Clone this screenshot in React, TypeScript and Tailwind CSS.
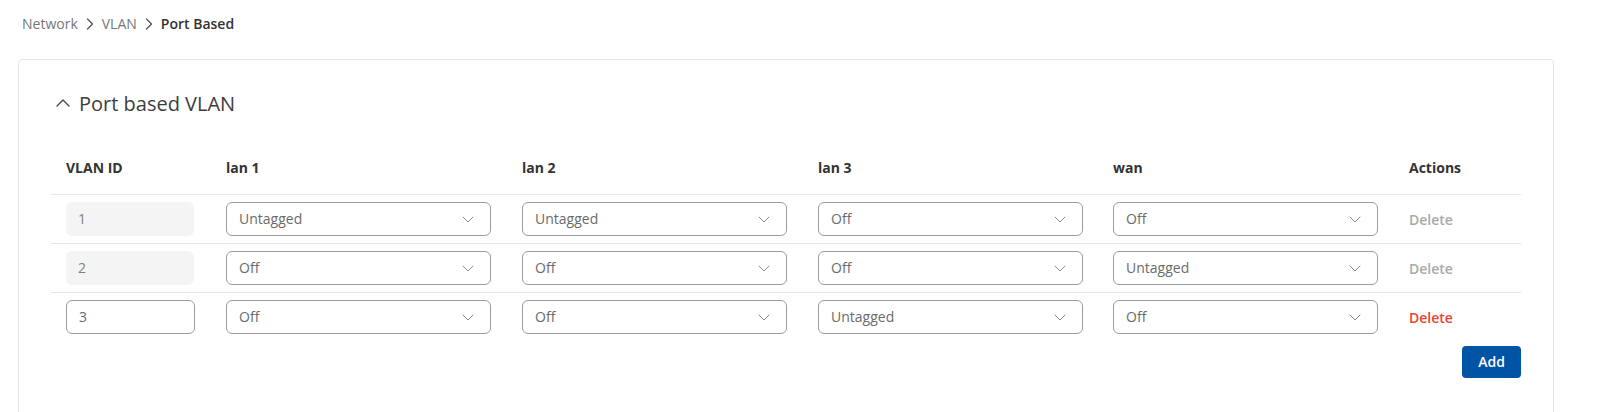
import { ChevronUp } from 'lucide-react';

type Port = 'Untagged' | 'Off' | 'Tagged';

interface VlanRow {
  id: string;
  editable: boolean;
  ports: Port[];
}

const columns = ['lan 1', 'lan 2', 'lan 3', 'wan'];

const rows: VlanRow[] = [
  { id: '1', editable: false, ports: ['Untagged', 'Untagged', 'Off', 'Off'] },
  { id: '2', editable: false, ports: ['Off', 'Off', 'Off', 'Untagged'] },
  { id: '3', editable: true, ports: ['Off', 'Off', 'Untagged', 'Off'] },
];

const Crumb = () => (
  <svg width="8" height="12" viewBox="0 0 8 12" fill="none" className="mx-[8px] shrink-0">
    <path d="M1.5 1l5 5-5 5" stroke="#555" strokeWidth="1.3" strokeLinecap="round" strokeLinejoin="round" />
  </svg>
);

const PortSelect = ({ value }: { value: Port }) => (
  <div className="flex h-[34px] w-[265px] items-center justify-between rounded-[6px] border border-[#9c9ca4] bg-white pl-3 pr-[16px] text-sm text-[#6b6b6b]">
    <span>{value}</span>
    <svg width="12" height="7" viewBox="0 0 12 7" fill="none">
      <path d="M1 1l5 5 5-5" stroke="#8a8a90" strokeWidth="1" strokeLinecap="round" strokeLinejoin="round" />
    </svg>
  </div>
);

export default function App() {
  return (
    <div className="min-h-[412px] bg-white pl-[18px] pr-[46px] font-['Open_Sans',sans-serif]">
      {/* Breadcrumb */}
      <div className="flex items-center pl-1 pt-[14px] text-sm leading-5">
        <span className="text-[#777]">Network</span>
        <Crumb />
        <span className="text-[#777]">VLAN</span>
        <Crumb />
        <span className="font-semibold text-[#333]">Port Based</span>
      </div>

      <div className="mt-[25px] rounded-[4px] border border-[#e3e6ea] px-8 pb-[40px] pt-[30px]">
        <div className="flex items-center">
          <ChevronUp className="-mt-[3px] h-6 w-6" strokeWidth={1.3} style={{ color: '#444' }} />
          <h2 className="ml-1 text-xl leading-7 font-medium text-[#3d3d3d]">Port based VLAN</h2>
        </div>

        <table className="mt-[28px] w-[1470px] table-fixed border-collapse">
          <colgroup>
            <col className="w-[160px]" />
            <col className="w-[296px]" />
            <col className="w-[296px]" />
            <col className="w-[295px]" />
            <col className="w-[296px]" />
            <col className="w-[127px]" />
          </colgroup>
          <thead>
            <tr className="border-b border-[#e1e7ee]">
              <th className="px-[15px] pb-4 pt-3 text-left text-sm leading-5 font-bold text-[#333]">VLAN ID</th>
              {columns.map((c) => (
                <th key={c} className="px-[15px] pb-4 pt-3 text-left text-sm leading-5 font-bold text-[#333]">
                  {c}
                </th>
              ))}
              <th className="px-[15px] pb-4 pt-3 text-left text-sm leading-5 font-bold text-[#333]">Actions</th>
            </tr>
          </thead>
          <tbody>
            {rows.map((row, i) => (
              <tr key={row.id} className={i < rows.length - 1 ? 'border-b border-[#e1e7ee]' : ''}>
                <td className="py-[7px] pl-[15px] pr-[15px]">
                  {row.editable ? (
                    <div className="flex h-[34px] w-[129px] items-center rounded-[6px] border border-[#9c9ca4] bg-white px-3 text-sm text-[#6b6b6b]">
                      {row.id}
                    </div>
                  ) : (
                    <div className="flex h-[34px] w-[128px] items-center rounded-[6px] bg-[#f4f4f4] px-3 text-sm text-[#808080]">
                      {row.id}
                    </div>
                  )}
                </td>
                {row.ports.map((p, j) => (
                  <td key={j} className="px-[15px] py-[7px]">
                    <PortSelect value={p} />
                  </td>
                ))}
                <td className="px-[15px] py-[7px]">
                  <button
                    className={`text-sm font-semibold ${row.editable ? 'text-[#e8442f]' : 'text-[#a9a9a9]'}`}
                  >
                    Delete
                  </button>
                </td>
              </tr>
            ))}
          </tbody>
        </table>

        <div className="flex w-[1470px] justify-end pt-[5px]">
          <button className="h-8 w-[59px] rounded-[4px] bg-[#0054a6] text-sm font-semibold text-white">Add</button>
        </div>
      </div>
    </div>
  );
}
